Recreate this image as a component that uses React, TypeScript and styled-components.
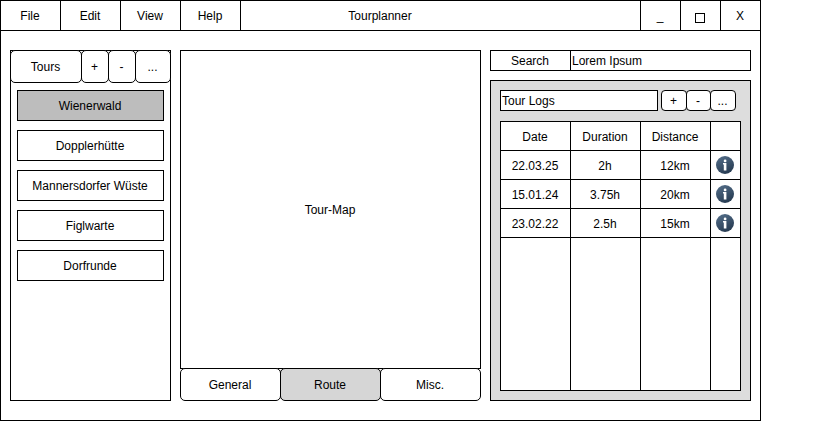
import React from "react";
import styled, { createGlobalStyle, css } from "styled-components";

const GlobalStyle = createGlobalStyle`
  * { box-sizing: border-box; }
  body {
    margin: 0;
    background: #fff;
    color: #000;
    font: 12px/14px "Liberation Sans", Arial, sans-serif;
  }
  button { font: inherit; color: inherit; margin: 0; }
`;

const centered = css`
  display: flex;
  align-items: center;
  justify-content: center;
  padding: 0 1px 0 0;
`;

const Window = styled.div`
  width: 761px;
  height: 421px;
  border: 1px solid #000;
`;

const TitleBar = styled.header`
  display: flex;
  height: 30px;
  border-bottom: 1px solid #000;
`;

const MenuItem = styled.div`
  ${centered}
  width: 60px;
  border-right: 1px solid #000;
`;

const Title = styled.h1`
  ${centered}
  flex: 1;
  margin: 0;
  padding-right: 121px;
  font: inherit;
`;

const WindowButton = styled.div`
  ${centered}
  width: 40px;
  border-left: 1px solid #000;
`;

const MaximizeIcon = styled.svg`
  width: 10px;
  height: 10px;
  margin-top: 5px;
`;

const Content = styled.main`
  display: grid;
  grid-template-columns: 161px 301px 261px;
  column-gap: 9px;
  height: 351px;
  margin: 19px 0 0 9px;
`;

const TourPanel = styled.aside`
  border: 1px solid #000;
`;

const TourHeader = styled.div`
  display: flex;
  margin: -1px;
`;

const RoundButton = styled.button<{ $w: number; $h: number; $r?: number; $active?: boolean }>`
  ${centered}
  flex: none;
  width: ${(p) => p.$w}px;
  height: ${(p) => p.$h}px;
  border: 1px solid #000;
  border-radius: ${(p) => p.$r ?? 5}px;
  background: ${(p) => (p.$active ? "#d6d6d6" : "#fff")};
  & + & { margin-left: -1px; }
`;

const TourList = styled.div`
  display: flex;
  flex-direction: column;
  gap: 9px;
  padding: 8px 6px;
`;

const TourItem = styled.div<{ $selected?: boolean }>`
  ${centered}
  height: 31px;
  border: 1px solid #000;
  background: ${(p) => (p.$selected ? "#bdbdbd" : "#fff")};
`;

const MapColumn = styled.section`
  display: flex;
  flex-direction: column;
`;

const MapView = styled.div`
  ${centered}
  height: 319px;
  border: 1px solid #000;
`;

const TabBar = styled.nav`
  display: flex;
  margin-top: -1px;
`;

const SideColumn = styled.section`
  display: flex;
  flex-direction: column;
  gap: 9px;
`;

const SearchBar = styled.div`
  display: flex;
  height: 21px;
  border: 1px solid #000;
`;

const SearchLabel = styled.div`
  ${centered}
  width: 80px;
  border-right: 1px solid #000;
`;

const SearchField = styled.div`
  display: flex;
  align-items: center;
  padding-left: 1px;
`;

const LogPanel = styled.div`
  flex: 1;
  padding: 9px;
  border: 1px solid #000;
  background: #ddd;
`;

const LogHeader = styled.div`
  display: flex;
`;

const LogTitle = styled.div`
  display: flex;
  align-items: center;
  width: 158px;
  height: 21px;
  margin-right: 3px;
  padding-left: 1px;
  border: 1px solid #000;
  background: #fff;
`;

const LogTable = styled.div`
  display: grid;
  grid-template-columns: 70px 70px 70px 29px;
  grid-template-rows: repeat(4, 29px) 1fr;
  width: 241px;
  height: 270px;
  margin-top: 10px;
  border: 1px solid #000;
  background: #fff;
`;

const Cell = styled.div<{ $lastCol?: boolean; $lastRow?: boolean }>`
  ${centered}
  padding-top: ${(p) => (p.$lastCol ? 0 : 2)}px;
  border: 0 solid #000;
  border-right-width: ${(p) => (p.$lastCol ? 0 : 1)}px;
  border-bottom-width: ${(p) => (p.$lastRow ? 0 : 1)}px;
`;

const InfoIcon = () => (
  <svg width="18" height="18" viewBox="0 0 18 18">
    <defs>
      <linearGradient id="info-disc" x1="0.25" y1="0" x2="0.75" y2="1">
        <stop offset="0" stopColor="#526c87" />
        <stop offset="1" stopColor="#24384e" />
      </linearGradient>
    </defs>
    <circle cx="9" cy="9" r="9" fill="url(#info-disc)" />
    <circle cx="9.1" cy="4.9" r="1.4" fill="#fff" />
    <path d="M7 7.1h3.4v7.3H7.8V8.4H7z" fill="#fff" />
  </svg>
);

const tours = ["Wienerwald", "Dopplerhütte", "Mannersdorfer Wüste", "Figlwarte", "Dorfrunde"];

const rows: React.ReactNode[][] = [
  ["Date", "Duration", "Distance", ""],
  ["22.03.25", "2h", "12km", <InfoIcon />],
  ["15.01.24", "3.75h", "20km", <InfoIcon />],
  ["23.02.22", "2.5h", "15km", <InfoIcon />],
  ["", "", "", ""],
];

export default function App() {
  return (
    <>
      <GlobalStyle />
      <Window>
        <TitleBar>
          {["File", "Edit", "View", "Help"].map((m) => (
            <MenuItem key={m}>{m}</MenuItem>
          ))}
          <Title>Tourplanner</Title>
          <WindowButton>_</WindowButton>
          <WindowButton>
            <MaximizeIcon viewBox="0 0 10 10">
              <rect x="0.5" y="0.5" width="9" height="9" fill="none" stroke="#000" />
            </MaximizeIcon>
          </WindowButton>
          <WindowButton>X</WindowButton>
        </TitleBar>
        <Content>
          <TourPanel>
            <TourHeader>
              <RoundButton $w={72} $h={33}>Tours</RoundButton>
              <RoundButton $w={28} $h={33}>+</RoundButton>
              <RoundButton $w={28} $h={33}>-</RoundButton>
              <RoundButton $w={36} $h={33}>...</RoundButton>
            </TourHeader>
            <TourList>
              {tours.map((t, i) => (
                <TourItem key={t} $selected={i === 0}>{t}</TourItem>
              ))}
            </TourList>
          </TourPanel>
          <MapColumn>
            <MapView>Tour-Map</MapView>
            <TabBar>
              <RoundButton $w={101} $h={33}>General</RoundButton>
              <RoundButton $w={101} $h={33} $active>Route</RoundButton>
              <RoundButton $w={101} $h={33}>Misc.</RoundButton>
            </TabBar>
          </MapColumn>
          <SideColumn>
            <SearchBar>
              <SearchLabel>Search</SearchLabel>
              <SearchField>Lorem Ipsum</SearchField>
            </SearchBar>
            <LogPanel>
              <LogHeader>
                <LogTitle>Tour Logs</LogTitle>
                <RoundButton $w={26} $h={21} $r={4}>+</RoundButton>
                <RoundButton $w={25} $h={21} $r={4}>-</RoundButton>
                <RoundButton $w={26} $h={21} $r={4}>...</RoundButton>
              </LogHeader>
              <LogTable>
                {rows.map((row, r) =>
                  row.map((value, c) => (
                    <Cell key={`${r}-${c}`} $lastCol={c === 3} $lastRow={r === rows.length - 1}>
                      {value}
                    </Cell>
                  ))
                )}
              </LogTable>
            </LogPanel>
          </SideColumn>
        </Content>
      </Window>
    </>
  );
}
